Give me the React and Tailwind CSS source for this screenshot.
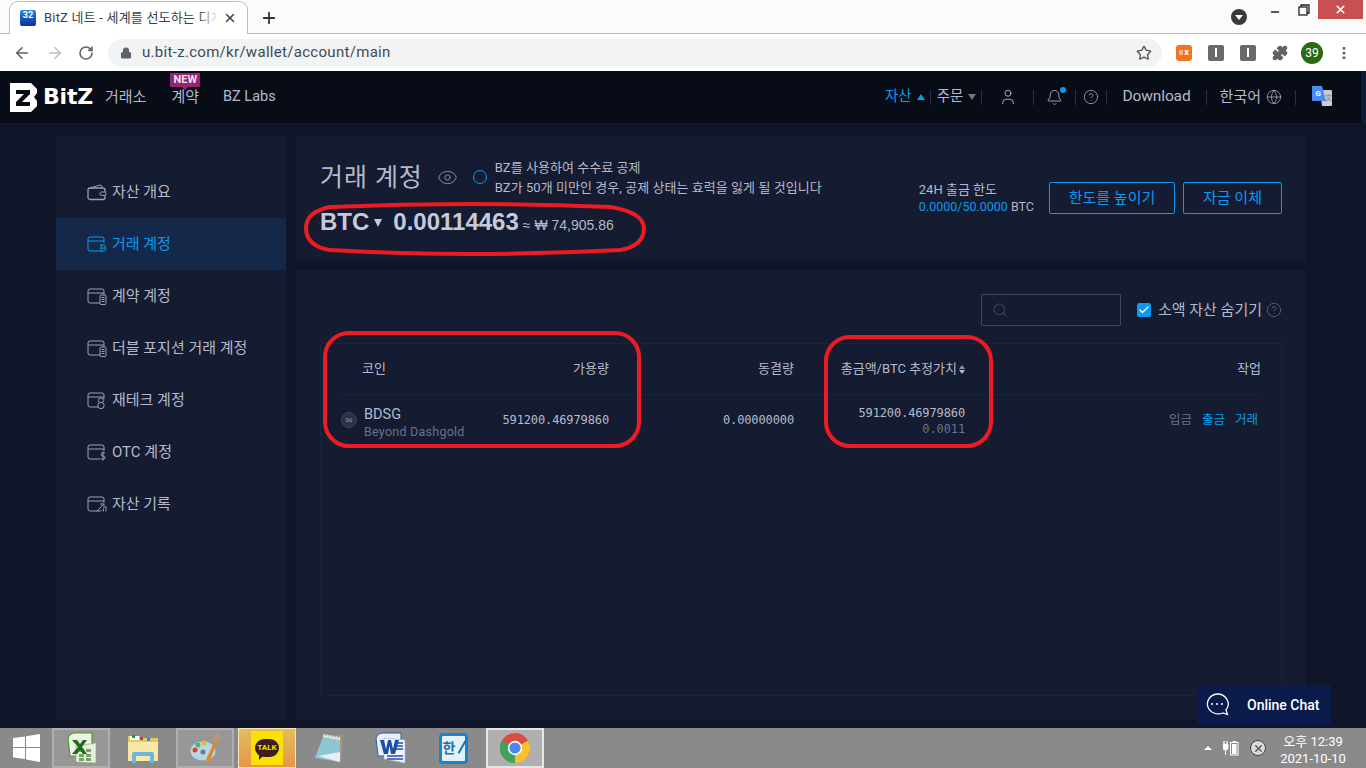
import React from "react";
import { ArrowLeft, ArrowRight, RotateCw, Lock, Star, Puzzle, X, Plus, Minus, User, Bell, CircleHelp, Globe, Eye, Search, Check, EllipsisVertical } from "lucide-react";

const font = "font-['Roboto','Noto_Sans_CJK_KR',sans-serif]";
const mono = "font-['DejaVu_Sans_Mono',monospace] text-[12px] tracking-[-0.12px]";

function WalletIcon({ kind, color = "#9aa1b5" }) {
  return (
    <svg width="20" height="17" viewBox="0 0 20 17" fill="none" stroke={color} strokeWidth="1" className="shrink-0">
      {kind === "overview" ? (
        <>
          <path d="M3 4 L13 1 Q15 .8 15 3 V4" />
          <rect x="1" y="4" width="17" height="11.5" rx="2" strokeWidth="1.3" />
          <rect x="13" y="8" width="6" height="3.4" rx="1.7" fill="#151b30" />
        </>
      ) : (
        <>
          <path d="M13 15 H3 Q1 15 1 13 V3 Q1 1 3 1 H15 Q17 1 17 3 V7" />
          <path d="M1 5 H17" />
          {kind === "btc" && <path d="M14 8 V16 M14 9 H17 Q18.5 9 18.5 10.6 Q18.5 12 17 12 H14 M17 12 Q19 12 19 13.6 Q19 15 17 15 H14" />}
          {kind === "doc" && (
            <>
              <rect x="13" y="7" width="6" height="9.5" rx="1" fill="#151b30" />
              <path d="M14.5 9.5 H17.5 M14.5 11.5 H17.5 M14.5 13.5 H17.5" />
            </>
          )}
          {kind === "people" && (
            <>
              <circle cx="14" cy="8.5" r="2.6" fill="#151b30" />
              <circle cx="14" cy="13.5" r="3.2" fill="#151b30" />
            </>
          )}
          {kind === "dollar" && <path d="M18 9 Q14 8 14 10.5 Q14 12 16 12 Q18.5 12.5 18 14.2 Q17 16 13.6 15 M16 7.5 V16.5" fill="#151b30" />}
          {kind === "chart" && <path d="M10 15.5 L16 8.5 M13 8 H17 V12 M14 15.5 V14 M16.5 15.5 V12.5 M19 15.5 V10" />}
        </>
      )}
    </svg>
  );
}

function Divider() {
  return <div className="w-px h-[15px] bg-[#2a3148]" />;
}

function TaskSlot({ active, children, highlight }) {
  const cls = highlight
    ? "border border-[#f7e7b4] bg-gradient-to-b from-[#e3bd5e] to-[#e5964a]"
    : active === 2
    ? "border-2 border-[#e6e6e6] bg-[#b0b0b0]"
    : active
    ? "border-2 border-[#aeaeae] bg-[#979797]"
    : "";
  return <div className={`w-[58px] h-[40px] flex items-center justify-center shrink-0 ${cls}`}>{children}</div>;
}

const menu = [
  ["overview", "자산 개요"],
  ["btc", "거래 계정", true],
  ["doc", "계약 계정"],
  ["doc", "더블 포지션 거래 계정"],
  ["people", "재테크 계정"],
  ["dollar", "OTC 계정"],
  ["chart", "자산 기록"],
];

const cols = "grid grid-cols-[130px_138px_185px_171px_1fr] items-center";

export default function App() {
  return (
    <div className={`relative w-[1366px] h-[768px] overflow-hidden flex flex-col bg-[#10152a] ${font}`}>
      {/* Browser tab strip */}
      <div className="h-[34px] shrink-0 bg-[#fbfbfb] border-b border-[#bdbdbd] flex items-end pl-[9px] relative">
        <div className="relative w-[239px] h-[33px] -mb-px bg-white border border-b-0 border-[#bdbdbd] rounded-t-[9px] flex items-center pl-[10px]">
          <div className="w-4 h-4 rounded-[2px] bg-gradient-to-b from-[#2a8ae6] to-[#0b2f95] text-white text-[9px] leading-[11px] font-bold text-center shrink-0">32</div>
          <div className="ml-[8px] w-[174px] overflow-hidden whitespace-nowrap text-[13px] text-[#3c4043] tracking-[0.2px] relative">
            BitZ 네트 - 세계를 선도하는 디지
            <div className="absolute right-0 top-0 bottom-0 w-5 bg-gradient-to-r from-transparent to-white" />
          </div>
          <X size={14} strokeWidth={2.6} className="text-[#444] ml-[5px]" />
        </div>
        <Plus size={18} strokeWidth={2.4} className="text-[#333] ml-[12px] mb-[6px]" />
        <div className="ml-auto flex items-start h-full">
          <div className="w-[16px] h-[16px] rounded-full bg-[#3a3a3a] mt-[9px] mr-[22px] flex items-center justify-center">
            <div className="w-0 h-0 border-l-[4px] border-r-[4px] border-t-[5px] border-l-transparent border-r-transparent border-t-white" />
          </div>
          <Minus size={12} strokeWidth={3} className="text-[#222] mt-[6px] mr-[17px]" />
          <svg width="12" height="12" viewBox="0 0 12 12" fill="none" stroke="#222" strokeWidth="1.3" className="mt-[4px] mr-[8px]">
            <rect x="1" y="3" width="8" height="8" />
            <path d="M3 3 V1 H11 V9 H9" />
          </svg>
          <div className="w-[45px] h-[19px] bg-[#c75050] flex items-center justify-center mr-[3px]">
            <X size={13} strokeWidth={3} className="text-white" />
          </div>
        </div>
      </div>

      {/* Address bar */}
      <div className="h-[37px] shrink-0 bg-white flex items-center pl-[13px]">
        <ArrowLeft size={18} strokeWidth={2.2} className="text-[#5f6368]" />
        <ArrowRight size={18} strokeWidth={2.2} className="text-[#bcbec1] ml-[15px]" />
        <RotateCw size={16} strokeWidth={2.4} className="text-[#5f6368] ml-[14px]" />
        <div className="ml-[14px] w-[1054px] h-[28px] rounded-full bg-[#f1f3f4] flex items-center pl-[12px] pr-[10px]">
          <Lock size={12} fill="#5f6368" strokeWidth={2.2} className="text-[#5f6368]" />
          <span className="ml-[10px] text-[15px] text-[#3c4b58] tracking-[0.3px]">u.bit-z.com/kr/wallet/account/main</span>
          <Star size={16} strokeWidth={2} className="ml-auto text-[#555]" />
        </div>
        <div className="ml-[14px] w-4 h-4 rounded-[3px] bg-[#f47321] flex items-center justify-center gap-[1px]">
          <div className="w-[4px] h-[5px] bg-[#f7b48a]" />
          <span className="text-[9px] font-bold text-white leading-none">x</span>
        </div>
        <div className="ml-[16px] w-4 h-4 rounded-[2px] bg-[#6a6a6a] flex items-center justify-center"><div className="w-[1.5px] h-[9px] bg-white" /></div>
        <div className="ml-[16px] w-4 h-4 rounded-[2px] bg-[#6a6a6a] flex items-center justify-center"><div className="w-[1.5px] h-[9px] bg-white" /></div>
        <Puzzle size={16} fill="#5f6368" className="text-[#5f6368] ml-[16px]" />
        <div className="ml-[13px] w-[22px] h-[22px] rounded-full bg-[#2b6a14] text-white text-[12px] flex items-center justify-center">39</div>
        <EllipsisVertical size={16} strokeWidth={2.6} className="text-[#5f6368] ml-[13px]" />
      </div>

      {/* Site header */}
      <header className="h-[52px] shrink-0 bg-[#080c17] flex items-center text-[15px] text-[#b4bacb] relative">
        <div className="flex items-center pl-[10px]">
          <svg width="27" height="29" viewBox="0 0 27 29">
            <path d="M0 0 H21 L27 6 V10 L24 14 L27 18 V23 L21 29 H0 Z" fill="#fff" />
            <path d="M6 7 H20 V11 L12 19 H20 V23 H6 V19 L14 11 H6 Z" fill="#080c17" />
          </svg>
          <span className="ml-[6px] text-[22px] leading-none font-['DejaVu_Sans',sans-serif] font-bold text-white tracking-[-0.2px]">BitZ</span>
        </div>
        <span className="ml-[12px]">거래소</span>
        <div className="relative ml-[25px]">
          <span>계약</span>
          <div className="absolute -top-[13px] -left-[1px] w-[30px] h-[14px] rounded-[1px] bg-[#962474] text-[#f0e3ef] text-[11px] leading-[14px] font-bold text-center">NEW</div>
          <div className="absolute top-[1px] left-[11px] w-0 h-0 border-l-[3px] border-r-[3px] border-t-[3px] border-l-transparent border-r-transparent border-t-[#962474]" />
        </div>
        <span className="ml-[24px] text-[14.5px]">BZ Labs</span>

        <div className="ml-auto flex items-center h-full">
          <span className="text-[14.5px] text-[#0a9bf0]">자산</span>
          <div className="ml-[5px] w-0 h-0 border-l-[4px] border-r-[4px] border-b-[6px] border-l-transparent border-r-transparent border-b-[#0a9bf0]" />
          <div className="ml-[5px]"><Divider /></div>
          <span className="ml-[6px] text-[14.5px]">주문</span>
          <div className="ml-[5px] w-0 h-0 border-l-[4px] border-r-[4px] border-t-[6px] border-l-transparent border-r-transparent border-t-[#6f7482]" />
          <div className="ml-[5px]"><Divider /></div>
          <User size={18} strokeWidth={1.2} className="ml-[17px]" />
          <div className="ml-[16px]"><Divider /></div>
          <div className="relative ml-[12px]">
            <Bell size={17} strokeWidth={1.2} />
            <div className="absolute -top-[2px] -right-[3px] w-[6px] h-[6px] rounded-full bg-[#0a9bf0]" />
          </div>
          <div className="ml-[12px]"><Divider /></div>
          <CircleHelp size={16} strokeWidth={1.1} className="ml-[7px]" />
          <div className="ml-[7px]"><Divider /></div>
          <span className="ml-[15px] text-[15.5px] tracking-[-0.1px]">Download</span>
          <div className="ml-[15px]"><Divider /></div>
          <span className="ml-[13px]">한국어</span>
          <Globe size={16} strokeWidth={1.1} className="ml-[5px]" />
          <div className="ml-[13px]"><Divider /></div>
          <svg width="22" height="22" viewBox="0 0 22 22" className="ml-[15px] mr-[28px] -mt-[3px]">
            <path d="M9 5 H20 Q21 5 21 6 V20 Q21 21 20 21 H11 Z" fill="#c9cdd3" />
            <path d="M1 1 H11 L15 16 H2 Q1 16 1 15 Z" fill="#4a8af4" />
            <text x="4.5" y="11" fontSize="8" fontWeight="700" fill="#fff">G</text>
            <text x="14" y="15" fontSize="7" fill="#7a7f88">文</text>
          </svg>
          <div className="w-[5px] h-full bg-[#101a3a]" />
        </div>
      </header>

      {/* Page */}
      <main className="flex-1 min-h-0 flex gap-[10px] pl-[56px] pr-[60px] pt-[13px] pb-[8px]">
        <aside className="w-[230px] shrink-0 bg-[#151b30] pt-[30px]">
          {menu.map(([kind, label, active]) => (
            <div key={label} className={`h-[52px] flex items-center gap-[5px] pl-[31px] text-[15px] ${active ? "bg-[#14294a] text-[#0a9bf0]" : "text-[#b4bacb]"}`}>
              <WalletIcon kind={kind} color={active ? "#0a9bf0" : "#9aa1b5"} />
              <span>{label}</span>
            </div>
          ))}
        </aside>

        <div className="flex-1 flex flex-col gap-[9px] min-w-0">
          <section className="h-[125px] shrink-0 bg-[#151b30] pl-[24px] pr-[24px] relative flex">
            <div className="flex-1">
              <div className="flex items-start pt-[21px]">
                <h1 className="mt-[2px] text-[25px] leading-[38px] font-normal text-[#b4bacb] tracking-[0.9px]">거래 계정</h1>
                <Eye size={21} strokeWidth={1.1} className="ml-[14px] mt-[10px] text-[#8a90a3]" />
                <div className="ml-[15px] mt-[13px] w-[14px] h-[14px] rounded-full border border-[#0a9bf0]" />
                <div className="ml-[8px] mt-[1px] text-[13px] leading-[20px] text-[#b4bacb] tracking-[0.05px]">
                  <div>BZ를 사용하여 수수료 공제</div>
                  <div>BZ가 50개 미만인 경우, 공제 상태는 효력을 잃게 될 것입니다</div>
                </div>
              </div>
              <div className="flex items-center mt-[8px] h-[32px] text-[#c5cbdc] font-['Liberation_Sans',sans-serif]">
                <span className="text-[24px] font-bold">BTC</span>
                <div className="ml-[5px] mt-[2px] w-0 h-0 border-l-[4px] border-r-[4px] border-t-[8px] border-l-transparent border-r-transparent border-t-[#c5cbdc]" />
                <span className="ml-[11px] text-[24px] font-bold">0.00114463</span>
                <span className="ml-[4px] mt-[6px] text-[14px] text-[#b4bacb]">≈ ₩ 74,905.86</span>
              </div>
            </div>
            <div className="flex items-start pt-[46px]">
              <div className="-mt-[1px] text-[12.5px] leading-[17px] text-[#b4bacb] pr-[15px]">
                <div className="text-[13px]">24H 출금 한도</div>
                <div><span className="text-[#0a9bf0]">0.0000/50.0000</span> BTC</div>
              </div>
              <button className="w-[126px] h-[32px] border border-[#0a9bf0] rounded-[2px] text-[#0a9bf0] text-[15px]">한도를 높이기</button>
              <button className="ml-[8px] w-[99px] h-[32px] border border-[#0a9bf0] rounded-[2px] text-[#0a9bf0] text-[15px]">자금 이체</button>
            </div>
          </section>

          <section className="flex-1 min-h-0 bg-[#151b30] px-[24px] pt-[24px] pb-[24px] flex flex-col">
            <div className="flex items-center justify-end h-[32px] text-[15px] text-[#b4bacb]">
              <div className="w-[140px] h-[32px] border border-[#3f465c] rounded-[1px] flex items-center pl-[10px]">
                <Search size={16} strokeWidth={1.6} className="text-[#3f465c]" />
              </div>
              <div className="ml-[16px] w-[14px] h-[14px] rounded-[2px] bg-[#0a9bf0] flex items-center justify-center">
                <Check size={12} strokeWidth={2.4} className="text-white" />
              </div>
              <span className="ml-[7px]">소액 자산 숨기기</span>
              <CircleHelp size={16} strokeWidth={1.3} className="ml-[4px] text-[#5e6478]" />
            </div>

            <div className="mt-[17px] flex-1 border border-[#13263f] rounded-[2px] px-[20px]">
              <div className={`h-[51px] border-b border-[#13263f] ${cols} text-[13px] text-[#b4bacb]`}>
                <span className="pl-[21px]">코인</span>
                <span className="text-right">가용량</span>
                <span className="text-right">동결량</span>
                <span className="flex items-center justify-end gap-[2px] whitespace-nowrap">
                  총금액/BTC 추정가치
                  <span className="flex flex-col gap-[1px]">
                    <span className="w-0 h-0 border-l-[3px] border-r-[3px] border-b-[4px] border-l-transparent border-r-transparent border-b-[#8d93a6]" />
                    <span className="w-0 h-0 border-l-[3px] border-r-[3px] border-t-[4px] border-l-transparent border-r-transparent border-t-[#b4bacb]" />
                  </span>
                </span>
                <span className="text-right">작업</span>
              </div>
              <div className={`h-[50px] ${cols} text-[#b4bacb]`}>
                <div className="flex items-center whitespace-nowrap">
                  <div className="w-4 h-4 rounded-full bg-[#2c3245] border border-[#3d4358] flex items-center justify-center text-[5px] text-[#aab] leading-none shrink-0">DG</div>
                  <div className="ml-[7px] pt-[5px]">
                    <div className="text-[14.5px] leading-[17px]">BDSG</div>
                    <div className="text-[12.5px] leading-[17px] text-[#68738f] tracking-[0.25px]">Beyond Dashgold</div>
                  </div>
                </div>
                <span className={`text-right ${mono}`}>591200.46979860</span>
                <span className={`text-right ${mono}`}>0.00000000</span>
                <div className={`text-right leading-[16px] pt-[1px] ${mono}`}>
                  <div>591200.46979860</div>
                  <div className="text-[#68738f]">0.0011</div>
                </div>
                <div className="flex justify-end gap-[10px] text-[12.5px] pr-[3px]">
                  <span className="text-[#68738f]">입금</span>
                  <span className="text-[#0a9bf0]">출금</span>
                  <span className="text-[#0a9bf0]">거래</span>
                </div>
              </div>
            </div>
          </section>
        </div>
      </main>

      {/* Windows taskbar */}
      <footer className="h-[40px] shrink-0 bg-[#8a8a8a] flex items-center">
        <div className="w-[52px] flex items-center justify-center pl-[1px]">
          <svg width="27" height="28" viewBox="0 0 27 28" fill="#fff">
            <path d="M0 4 L12 2.4 V13 H0 Z M13 2.2 L27 0 V13 H13 Z M0 14 H12 V25 L0 23.5 Z M13 14 H27 V28 L13 25.6 Z" />
          </svg>
        </div>
        <div className="flex gap-[4px]">
          <TaskSlot active={1}>
            <svg width="30" height="32" viewBox="0 0 30 32">
              <path d="M2 7 Q3 1 9 1 H26 V24 H4 Z" fill="#eaf5e4" stroke="#4d9a2b" strokeWidth="1.2" />
              <path d="M10 14 L30 11 V31 L10 30 Z" fill="#e6eedc" stroke="#8ba77d" strokeWidth=".6" />
              <path d="M13 17 H18 V20 H13 Z M20 17 H25 V20 H20 Z M13 22 H18 V25 H13 Z M20 22 H25 V25 H20 Z M13 26 H18 V29 H13 Z M20 26 H25 V29 H20 Z" fill="#7aa467" />
              <path d="M6 8 H11 L14 12 L17 8 H21 L16 15 L21 22 H17 L14 18 L11 22 H6 L12 15 Z" fill="#1e6a1e" />
            </svg>
          </TaskSlot>
          <TaskSlot>
            <svg width="32" height="30" viewBox="0 0 32 30">
              <path d="M1 3 H12 L14 5 H31 V27 H1 Z" fill="#e8c766" />
              <rect x="3" y="3" width="9" height="4" fill="#fff" />
              <rect x="5" y="2" width="3" height="3" fill="#1ca01c" />
              <rect x="13" y="4" width="3" height="3" fill="#d33" />
              <rect x="20" y="5" width="3" height="3" fill="#2a8ae6" />
              <path d="M1 9 H31 V28 H1 Z" fill="#f8e9a9" />
              <path d="M5 30 V21 Q5 19 7 19 H25 Q27 19 27 21 V30 H23 V23 H9 V30 Z" fill="#6cb6df" />
            </svg>
          </TaskSlot>
          <TaskSlot active={1}>
            <svg width="32" height="32" viewBox="0 0 32 32">
              <ellipse cx="14" cy="19" rx="13" ry="10" fill="#b8d6e8" stroke="#7ba6c0" />
              <circle cx="6" cy="18" r="2.5" fill="#d94040" />
              <circle cx="9" cy="13" r="2.5" fill="#58b858" />
              <circle cx="15" cy="11" r="2.5" fill="#e8b830" />
              <circle cx="14" cy="20" r="2.5" fill="#6a7a8a" />
              <path d="M16 30 L25 10 L28 11 L20 31 Z" fill="#e08a2e" />
              <path d="M24 9 L27 1 L32 3 L29 11 Z" fill="#c09470" />
            </svg>
          </TaskSlot>
          <TaskSlot highlight>
            <div className="w-[32px] h-[34px] bg-[#fae100] flex items-center justify-center relative">
              <div className="relative w-[24px] h-[18px] rounded-full bg-[#3c1e1e] text-[#fae100] text-[8px] font-bold leading-[18px] text-center">TALK</div>
              <div className="absolute left-[8px] bottom-[5px] w-0 h-0 border-t-[5px] border-r-[5px] border-t-[#3c1e1e] border-r-transparent" />
            </div>
          </TaskSlot>
          <TaskSlot>
            <svg width="30" height="32" viewBox="0 0 30 32">
              <path d="M8 3 L28 3 L28 26 L22 31 Z" fill="#a89678" />
              <path d="M10 2 L26 5 L26 30 L1 26 Z" fill="#8fc6d4" />
              <path d="M10 2 L26 5 L26 8 L9 5 Z" fill="#e6e6e6" />
              <path d="M12 1 V4 M15 1.5 V4.5 M18 2 V5 M21 2.5 V5.5 M24 3 V6" stroke="#777" strokeWidth=".8" />
              <path d="M4 24 L26 30 L26 20 Z" fill="#e9eef1" />
            </svg>
          </TaskSlot>
          <TaskSlot>
            <svg width="32" height="32" viewBox="0 0 32 32">
              <path d="M1 6 Q3 1 8 1 H26 V24 H3 Z" fill="#e8eff9" stroke="#2b5cb0" />
              <path d="M9 6 L30 8 V31 L9 27 Z" fill="#f2f5fa" stroke="#a0aec4" strokeWidth=".6" />
              <path d="M5 8 H9 L11 17 L13 8 H16 L18 17 L20 8 H24 L20 22 H16 L14.5 14 L13 22 H9 Z" fill="#1d4fa8" />
              <path d="M21 11 H28 M21 14 H28 M21 17 H28 M12 24 H28 M12 27 H28" stroke="#1d4fa8" strokeWidth="1.4" />
            </svg>
          </TaskSlot>
          <TaskSlot>
            <div className="relative w-[29px] h-[31px] rounded-[4px] border-[3px] border-[#1a82cf] bg-[#e3f0f8] flex items-center pl-[1px] text-[14px] font-bold leading-none text-[#1a6fb5]">
              한
              <div className="absolute right-[2px] top-[4px] w-[1.5px] h-[14px] bg-[#1a6fb5] rotate-[30deg]" />
            </div>
          </TaskSlot>
          <TaskSlot active={2}>
            <svg width="30" height="30" viewBox="0 0 30 30">
              <circle cx="15" cy="15" r="15" fill="#dd4b3e" />
              <path d="M15 15 L28 7.5 A15 15 0 0 1 15 30 Z" fill="#fbc02d" />
              <path d="M15 15 L15 30 A15 15 0 0 1 2 7.5 Z" fill="#3ba55d" />
              <circle cx="15" cy="15" r="7.2" fill="#fff" />
              <circle cx="15" cy="15" r="5.6" fill="#4a85f0" />
            </svg>
          </TaskSlot>
        </div>
        <div className="ml-auto flex items-center text-white">
          <div className="w-0 h-0 border-l-[4px] border-r-[4px] border-b-[4px] border-l-transparent border-r-transparent border-b-white" />
          <svg width="16" height="16" viewBox="0 0 16 16" className="ml-[11px]">
            <path d="M1 1 V4 M4 1 V4" stroke="#fff" strokeWidth="1.4" />
            <path d="M0 4.5 H5 V8 Q5 10 2.5 10 Q0 10 0 8 Z M2.5 10 V15" fill="#fff" stroke="#fff" />
            <rect x="7.5" y="2.5" width="7.5" height="12.5" fill="#8a8a8a" stroke="#fff" />
            <rect x="9" y="4" width="4.5" height="10" fill="#fff" />
            <rect x="9.5" y="1" width="3.5" height="1.5" fill="#fff" />
          </svg>
          <div className="ml-[11px] w-4 h-4 rounded-full bg-[#dadada] border border-[#444] flex items-center justify-center">
            <X size={11} strokeWidth={3} className="text-[#555]" />
          </div>
          <div className="ml-[14px] mr-[20px] pt-[3px] w-[66px] text-center text-[13px] leading-[17px] text-white">
            <div>오후 12:39</div>
            <div className="whitespace-nowrap">2021-10-10</div>
          </div>
        </div>
      </footer>

      {/* Floating online chat */}
      <div className="absolute left-[1197px] top-[685px] w-[134px] h-[40px] bg-[#0a1b4b] flex items-center text-white text-[14px] font-medium">
        <svg width="26" height="26" viewBox="0 0 26 26" fill="none" stroke="#fff" strokeWidth="1.3" className="ml-[7px]">
          <path d="M13 2 A11 10 0 1 0 19 21 L23.5 22.5 L22 18 A11 10 0 0 0 13 2 Z" />
          <circle cx="8" cy="12" r="1" fill="#fff" stroke="none" />
          <circle cx="13" cy="12" r="1" fill="#fff" stroke="none" />
          <circle cx="18" cy="12" r="1" fill="#fff" stroke="none" />
        </svg>
        <span className="ml-[17px] whitespace-nowrap">Online Chat</span>
      </div>

      {/* Red hand-drawn annotations */}
      <svg width="1366" height="768" viewBox="0 0 1366 768" fill="none" stroke="#ed1c24" strokeWidth="4" className="absolute left-0 top-0 pointer-events-none">
        <path d="M306 228 Q306 212 330 207 Q470 201 610 207 Q643 212 644 228 Q644 246 620 250 Q470 258 330 250 Q306 246 306 228 Z" />
        <rect x="325" y="333" width="314" height="113" rx="24" />
        <rect x="826" y="337" width="165" height="109" rx="24" />
      </svg>
    </div>
  );
}
